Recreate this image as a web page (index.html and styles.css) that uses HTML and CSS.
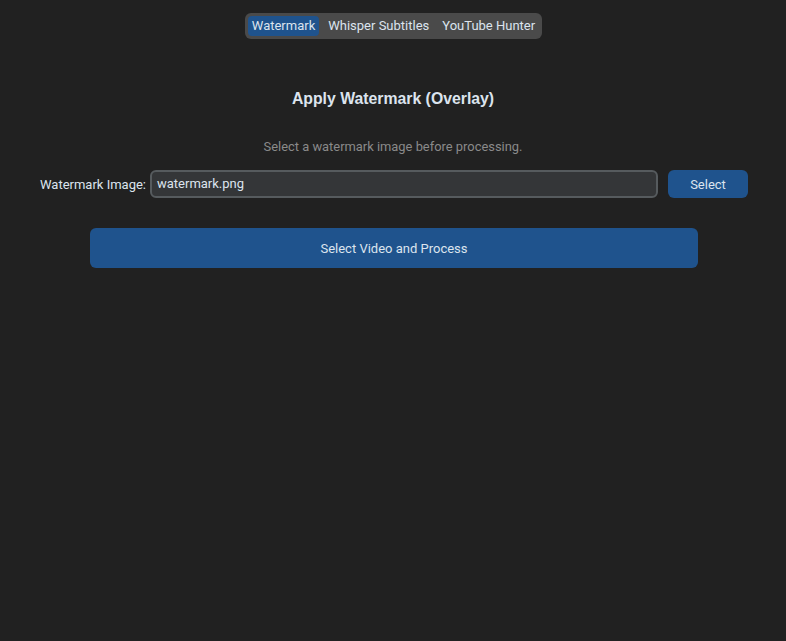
FILE: index.html
```html
<!DOCTYPE html>
<html>
<head>
<meta charset="utf-8">
<link rel="stylesheet" href="styles.css">
</head>
<body>
<div class="app">
  <div class="tabs-wrap">
    <div class="tabs">
      <div class="tab active">Watermark</div>
      <div class="tab">Whisper Subtitles</div>
      <div class="tab">YouTube Hunter</div>
    </div>
  </div>
  <h1 class="title">Apply Watermark (Overlay)</h1>
  <p class="hint">Select a watermark image before processing.</p>
  <div class="row">
    <span class="label">Watermark Image:</span>
    <div class="input">watermark.png</div>
    <button class="btn small">Select</button>
  </div>
  <div class="process-wrap">
    <button class="btn big">Select Video and Process</button>
  </div>
</div>
</body>
</html>
```

FILE: styles.css
```css
html, body {
  margin: 0;
  padding: 0;
  background: #212121;
  width: 786px;
  height: 641px;
  overflow: hidden;
}
.app {
  font-family: Roboto, "Liberation Sans", sans-serif;
  font-size: 13px;
  color: #dce4ee;
  display: flex;
  flex-direction: column;
}
.tabs-wrap {
  display: flex;
  justify-content: center;
  padding-top: 13px;
}
.tabs {
  display: flex;
  gap: 5px;
  background: #4a4a4a;
  border-radius: 6px;
  padding: 3px;
  height: 20px;
  margin-left: 1px;
}
.tab {
  height: 20px;
  line-height: 20px;
  padding: 0 4px;
  border-radius: 4px;
  font-size: 13px;
}
.tab.active { background: #1f538d; }
.title {
  margin: 50px 0 0 0;
  text-align: center;
  font-family: "Liberation Sans", Arial, sans-serif;
  font-weight: bold;
  font-size: 15.8px;
  line-height: 20px;
  color: #dce4ee;
}
.hint {
  margin: 30px 0 0 0;
  text-align: center;
  color: #8a8a8a;
  font-size: 12.9px;
  line-height: 16px;
}
.row {
  display: flex;
  align-items: center;
  margin-top: 15px;
  height: 28px;
  padding-left: 40px;
}
.label {
  width: 110px;
}
.input {
  box-sizing: border-box;
  width: 508px;
  height: 28px;
  border: 2px solid #565b5e;
  background: #343638;
  border-radius: 6px;
  padding-left: 5px;
  line-height: 24px;
  color: #dce4ee;
}
.btn {
  border: none;
  background: #1f538d;
  color: #dce4ee;
  font-family: Roboto, "Liberation Sans", sans-serif;
  font-size: 13px;
  border-radius: 6px;
  padding: 0;
}
.btn.small {
  width: 80px;
  height: 28px;
  margin-left: 10px;
}
.process-wrap {
  padding-left: 90px;
  margin-top: 30px;
}
.btn.big {
  width: 608px;
  height: 40px;
}
```
